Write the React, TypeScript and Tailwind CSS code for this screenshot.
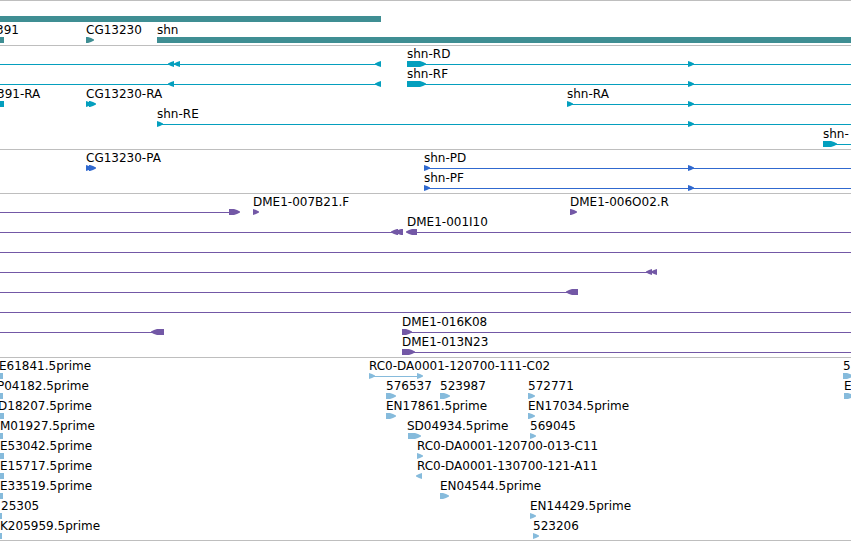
type Label = { x: number; text: string };
type Shape =
  | { kind: 'line'; from: number; to?: number }
  | { kind: 'bar'; from: number; to?: number }
  | { kind: 'fwd' | 'rev'; from: number; to: number };
type Lane = { labels?: Label[]; shapes: Shape[] };
type Track = { name: string; color: string; spacing: string; lane: string; lanes: Lane[] };

const label = (x: number, text: string): Label => ({ x, text });
const line = (from: number, to?: number): Shape => ({ kind: 'line', from, to });
const bar = (from: number, to?: number): Shape => ({ kind: 'bar', from, to });
const fwd = (from: number, to: number): Shape => ({ kind: 'fwd', from, to });
const rev = (from: number, to: number): Shape => ({ kind: 'rev', from, to });

const tracks: Track[] = [
  {
    name: 'Genes',
    color: 'text-[#3f8e93]',
    spacing: 'pb-0.5',
    lane: 'h-[21px]',
    lanes: [
      { shapes: [bar(0, 381)] },
      {
        labels: [label(-4, '391'), label(86, 'CG13230'), label(157, 'shn')],
        shapes: [bar(0, 4), fwd(86, 94), bar(157)],
      },
    ],
  },
  {
    name: 'Transcripts',
    color: 'text-[#049fbe]',
    spacing: 'pb-[3px]',
    lane: 'h-5',
    lanes: [
      {
        labels: [label(407, 'shn-RD')],
        shapes: [line(0, 381), rev(168, 174), rev(174, 180), rev(375, 381), fwd(407, 426), line(425), fwd(688, 694)],
      },
      {
        labels: [label(407, 'shn-RF')],
        shapes: [line(0, 381), rev(168, 174), rev(375, 381), fwd(407, 426), line(425), fwd(688, 694)],
      },
      {
        labels: [label(-3, '391-RA'), label(86, 'CG13230-RA'), label(567, 'shn-RA')],
        shapes: [bar(0, 4), fwd(86, 92), fwd(89, 96), fwd(567, 573), line(568), fwd(688, 694)],
      },
      { labels: [label(157, 'shn-RE')], shapes: [fwd(157, 163), line(158), fwd(688, 694)] },
      { labels: [label(823, 'shn-')], shapes: [fwd(823, 837), line(834)] },
    ],
  },
  {
    name: 'Proteins',
    color: 'text-[#3069cf]',
    spacing: 'pb-[3px]',
    lane: 'h-5',
    lanes: [
      {
        labels: [label(86, 'CG13230-PA'), label(424, 'shn-PD')],
        shapes: [fwd(86, 92), fwd(89, 96), fwd(424, 430), line(425), fwd(688, 694)],
      },
      { labels: [label(424, 'shn-PF')], shapes: [fwd(424, 430), line(425), fwd(688, 694)] },
    ],
  },
  {
    name: 'Clones',
    color: 'text-[#7358a6]',
    spacing: 'pb-[3px]',
    lane: 'h-5',
    lanes: [
      {
        labels: [label(253, 'DME1-007B21.F'), label(570, 'DME1-006O02.R')],
        shapes: [line(0, 230), fwd(229, 240), fwd(253, 259), fwd(570, 577)],
      },
      {
        labels: [label(407, 'DME1-001I10')],
        shapes: [line(0, 393), rev(391, 398), rev(395, 403), rev(406, 417), line(416)],
      },
      { shapes: [line(0)] },
      { shapes: [line(0, 648), rev(646, 652), rev(651, 657)] },
      { shapes: [line(0, 568), rev(566, 578)] },
      { shapes: [line(0)] },
      {
        labels: [label(402, 'DME1-016K08')],
        shapes: [line(0, 153), rev(151, 164), fwd(402, 412), line(411)],
      },
      { labels: [label(402, 'DME1-013N23')], shapes: [fwd(402, 415), line(412)] },
    ],
  },
  {
    name: 'ESTs',
    color: 'text-[#86bbdc]',
    spacing: 'pb-0.5',
    lane: 'h-5',
    lanes: [
      {
        labels: [label(-1, 'E61841.5prime'), label(369, 'RC0-DA0001-120700-111-C02'), label(843, '5')],
        shapes: [bar(0, 3), fwd(369, 375), line(370, 418), fwd(417, 423), fwd(843, 853)],
      },
      {
        labels: [
          label(-3, 'P04182.5prime'),
          label(386, '576537'),
          label(440, '523987'),
          label(528, '572771'),
          label(844, 'E'),
        ],
        shapes: [bar(0, 3), fwd(386, 396), fwd(440, 450), fwd(528, 535), fwd(844, 854)],
      },
      {
        labels: [label(-2, 'D18207.5prime'), label(386, 'EN17861.5prime'), label(528, 'EN17034.5prime')],
        shapes: [bar(0, 4), fwd(386, 396), fwd(528, 535)],
      },
      {
        labels: [label(0, 'M01927.5prime'), label(407, 'SD04934.5prime'), label(530, '569045')],
        shapes: [bar(0, 3), fwd(408, 421), fwd(530, 536)],
      },
      {
        labels: [label(0, 'E53042.5prime'), label(417, 'RC0-DA0001-120700-013-C11')],
        shapes: [bar(0, 4), fwd(417, 423)],
      },
      {
        labels: [label(0, 'E15717.5prime'), label(417, 'RC0-DA0001-130700-121-A11')],
        shapes: [bar(0, 4), rev(416, 422)],
      },
      {
        labels: [label(0, 'E33519.5prime'), label(440, 'EN04544.5prime')],
        shapes: [bar(0, 3), fwd(440, 449)],
      },
      { labels: [label(1, '25305'), label(530, 'EN14429.5prime')], shapes: [bar(0, 2), fwd(530, 536)] },
      { labels: [label(0, 'K205959.5prime'), label(533, '523206')], shapes: [bar(0, 2), fwd(533, 539)] },
    ],
  },
];

function Glyph({ shape }: { shape: Shape }) {
  const { kind, from, to } = shape;
  if (kind === 'line' || kind === 'bar') {
    return (
      <rect
        x={from}
        y={kind === 'line' ? 18 : 15}
        width={to === undefined ? '100%' : to - from}
        height={kind === 'line' ? 1 : 6}
      />
    );
  }
  // The head tapers in two steps so that its shoulder stays full.
  const end = to as number;
  const size = Math.min(6, end - from);
  const dir = kind === 'fwd' ? 1 : -1;
  const tip = kind === 'fwd' ? end : from;
  const tail = kind === 'fwd' ? from : end;
  const neck = tip - dir * size;
  const shoulder = tip - dir * 3;
  return (
    <polygon
      points={`${tail},15 ${neck},15 ${shoulder},16 ${tip},17.5 ${tip},18.5 ${shoulder},20 ${neck},21 ${tail},21`}
    />
  );
}

function LaneRow({ lane, className }: { lane: Lane; className: string }) {
  return (
    <div className={`relative ${className}`}>
      <svg className="block h-[21px] w-full fill-current" aria-hidden="true">
        {lane.shapes.map((shape, i) => (
          <Glyph key={i} shape={shape} />
        ))}
      </svg>
      {lane.labels?.map(({ x, text }) => (
        <span key={text} className="absolute top-0 whitespace-nowrap text-black" style={{ left: x }}>
          {text}
        </span>
      ))}
    </div>
  );
}

export default function App() {
  return (
    <main className="w-full overflow-hidden border-b border-[#bebebe] bg-white font-['DejaVu_Sans',sans-serif] text-xs leading-4">
      {tracks.map((track) => (
        <section
          key={track.name}
          aria-label={track.name}
          className={`border-t border-[#bebebe] ${track.color} ${track.spacing}`}
        >
          {track.lanes.map((lane, i) => (
            <LaneRow key={i} lane={lane} className={track.lane} />
          ))}
        </section>
      ))}
    </main>
  );
}
